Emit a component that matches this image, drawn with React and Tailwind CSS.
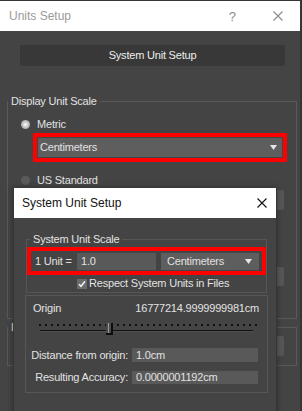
import React from 'react';

const Tri = () => (
    <svg width="7" height="5" viewBox="0 0 7 5" className="shrink-0">
        <path d="M0 0H7L3.5 5Z" fill="#e6e6e6" />
    </svg>
);

const Close = ({ color }) => (
    <svg width="10" height="10" viewBox="0 0 10 10">
        <path d="M0.5 0.5L9.5 9.5M9.5 0.5L0.5 9.5" stroke={color} strokeWidth="1.1" />
    </svg>
);

const Slider = () => {
    const dots = [];
    for (let x = 13; x <= 229; x += 6) dots.push(x);
    return (
        <svg width="240" height="18" viewBox="0 0 240 18" className="block">
            {dots.map((x) => (
                <rect key={x} x={x} y="6" width="2" height="2" fill="#111" />
            ))}
            <rect x="14" y="12" width="213" height="1" fill="#111" />
            <rect x="14" y="13" width="213" height="1" fill="#4f4f4f" />
            {/* thumb */}
            <rect x="80" y="5" width="7" height="11" fill="#4a4a4a" />
            <rect x="82" y="5" width="1" height="10" fill="#9a9a9a" />
            <rect x="85" y="5" width="2" height="12" fill="#0d0d0d" />
            <rect x="80" y="15" width="7" height="2" fill="#0d0d0d" />
        </svg>
    );
};

const App = () => {
    return (
        <div className="relative w-[302px] h-[411px] overflow-hidden bg-[#444444] font-['Liberation_Sans',Arial,sans-serif] text-[11px] leading-[13px] tracking-[-0.2px] text-[#e2e2e2]">
            {/* Units Setup window (behind) */}
            <div className="h-full border-t border-r-2 border-[#363636]">
                <div className="h-[30px] bg-white flex items-center pl-[9px] pr-[17px] tracking-normal">
                    <span className="text-[12px] text-[#9a9a9a]">Units Setup</span>
                    <span className="ml-auto mr-[37px] text-[13px] text-[#8a8a8a]">?</span>
                    <Close color="#8a8a8a" />
                </div>

                <div className="pt-[14px]">
                    <button className="ml-[20px] w-[265px] h-[21px] rounded-[2px] bg-[#383838] text-[11px] text-[#eeeeee] flex items-center justify-center">
                        System Unit Setup
                    </button>

                    <fieldset className="mt-[29px] ml-[7px] w-[290px] h-[224px] border border-[#595959]">
                        <legend className="px-[3px]">Display Unit Scale</legend>
                        <div className="mt-[10px] flex items-center h-[13px] pl-[13px] gap-[7px]">
                            <span className="w-[9px] h-[9px] rounded-full bg-[radial-gradient(circle,#ffffff_0%,#d0d0d0_35%,#8c8c8c_100%)]" />
                            <span>Metric</span>
                        </div>
                        <div className="mt-[2px] ml-[25px] w-[254px] h-[29px] border-4 border-[#ff0000] p-[1px]">
                            <div className="h-full bg-[#5e5e5e] flex items-center pl-[2px] pr-[5px]">
                                <span>Centimeters</span>
                                <span className="ml-auto"><Tri /></span>
                            </div>
                        </div>
                        <div className="mt-[12px] flex items-center h-[13px] pl-[13px] gap-[7px]">
                            <span className="w-[9px] h-[9px] rounded-full bg-[#5a5a5a]" />
                            <span>US Standard</span>
                        </div>
                        <div className="mt-[3px] ml-[25px] w-[251px] h-[20px] rounded-[2px] bg-[#575757]" />
                        <div className="mt-[57px] ml-[25px] w-[251px] h-[19px] rounded-[2px] bg-[#575757]" />
                    </fieldset>

                    <fieldset className="mt-[2px] ml-[7px] w-[290px] h-[45px] border border-[#595959]">
                        <legend className="px-[3px]">Lighting Units</legend>
                        <div className="mt-[2px] ml-[25px] w-[251px] h-[20px] rounded-[2px] bg-[#575757]" />
                    </fieldset>

                    <div className="mt-[14px] ml-[25px] w-[251px] h-[21px] rounded-[2px] bg-[#575757]" />
                </div>
            </div>

            {/* System Unit Setup dialog (front) */}
            <div className="absolute left-[13px] top-[188px] w-[264px] h-[230px] bg-[#444444] border-x border-[#353535] shadow-[0_0_6px_rgba(0,0,0,0.35)]">
                <div className="h-[30px] bg-white flex items-center pl-[8px] pr-[9px] tracking-normal">
                    <span className="text-[12px] text-[#111]">System Unit Setup</span>
                    <span className="ml-auto"><Close color="#111" /></span>
                </div>

                <fieldset className="mt-[15px] ml-[12px] w-[241px] pb-[2px] border border-[#565656]">
                    <legend className="ml-[3px] px-[3px]">System Unit Scale</legend>
                    <div className="mt-[1px] h-[28px] border-4 border-[#ff0000] flex items-center">
                        <span className="w-[46px] pl-[4px] shrink-0 whitespace-nowrap">1 Unit =</span>
                        <div className="w-[79px] h-[17px] bg-[#595959] flex items-center pl-[4px]">1.0</div>
                        <div className="ml-[5px] w-[98px] h-[17px] bg-[#5e5e5e] flex items-center pl-[6px] pr-[7px]">
                            <span>Centimeters</span>
                            <span className="ml-auto"><Tri /></span>
                        </div>
                    </div>
                    <div className="mt-[2px] h-[13px] flex items-center pl-[50px] gap-[2px]">
                        <span className="w-[10px] h-[10px] bg-[#6b6b6b] flex items-center justify-center">
                            <svg width="8" height="8" viewBox="0 0 8 8">
                                <path d="M1 4.2L3 6.3L7 1.3" stroke="#f2f2f2" strokeWidth="1.5" fill="none" />
                            </svg>
                        </span>
                        <span className="whitespace-nowrap">Respect System Units in Files</span>
                    </div>
                </fieldset>

                <div className="mt-[2px] ml-[11px] w-[243px] border border-[#575757] pt-[6px] pb-[8px]">
                    <div className="flex h-[13px] items-center pl-[7px] pr-[8px]">
                        <span>Origin</span>
                        <span className="ml-auto">16777214.9999999981cm</span>
                    </div>
                    <div className="mt-[3px]">
                        <Slider />
                    </div>
                    <div className="mt-[12px] flex items-center h-[14px]">
                        <span className="w-[102px] text-right whitespace-nowrap">Distance from origin:</span>
                        <div className="ml-[4px] w-[126px] h-[14px] bg-[#595959] flex items-center pl-[4px]">1.0cm</div>
                    </div>
                    <div className="mt-[9px] flex items-center h-[13px]">
                        <span className="w-[102px] text-right whitespace-nowrap">Resulting Accuracy:</span>
                        <div className="ml-[4px] w-[126px] h-[13px] bg-[#595959] flex items-center pl-[4px]">0.0000001192cm</div>
                    </div>
                </div>
            </div>
        </div>
    );
};

export default App;
